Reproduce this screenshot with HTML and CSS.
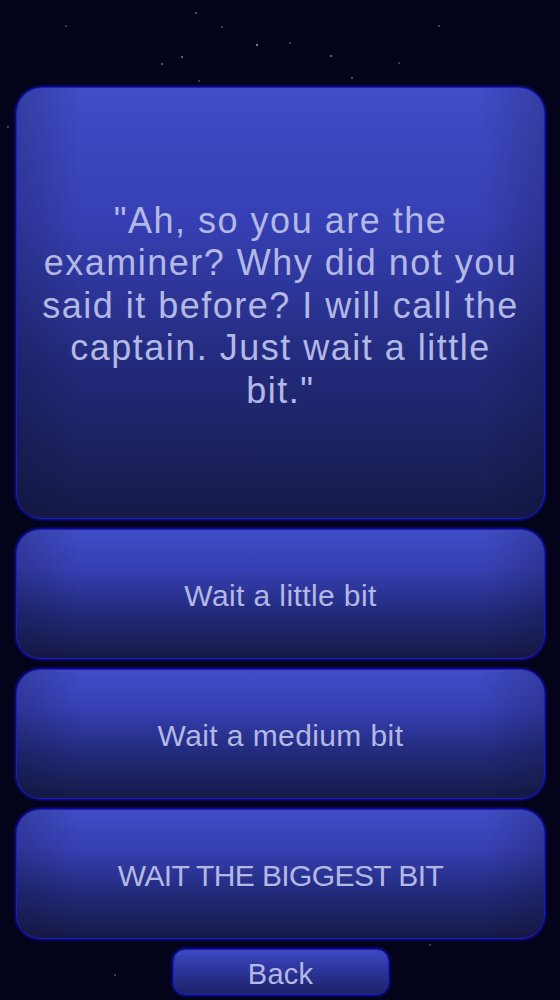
FILE: index.html
```html
<!DOCTYPE html>
<html lang="en">
<head>
<meta charset="utf-8">
<title>Dialogue</title>
<link rel="stylesheet" href="styles.css">
</head>
<body>
<main class="screen">
  <section class="panel speech">
    <p class="speech-text">"Ah, so you are the<br>examiner? Why did not you<br>said it before? I will call the<br>captain. Just wait a little<br>bit."</p>
  </section>
  <button class="panel choice">Wait a little bit</button>
  <button class="panel choice">Wait a medium bit</button>
  <button class="panel choice choice-caps">WAIT THE BIGGEST BIT</button>
  <button class="panel back">Back</button>
</main>
</body>
</html>
```
FILE: styles.css
```css
html, body {
  margin: 0;
  padding: 0;
}

body {
  width: 560px;
  height: 1000px;
  overflow: hidden;
  font-family: "Liberation Sans", Arial, sans-serif;
  background-color: #03031a;
  background-image:
    radial-gradient(circle at 257px 45px, rgba(170,170,220,0.7) 0 1px, transparent 1.6px),
    radial-gradient(circle at 182px 57px, rgba(150,150,210,0.6) 0 1px, transparent 1.6px),
    radial-gradient(circle at 331px 56px, rgba(150,150,210,0.6) 0 1px, transparent 1.6px),
    radial-gradient(circle at 162px 64px, rgba(140,140,200,0.5) 0 1px, transparent 1.5px),
    radial-gradient(circle at 196px 13px, rgba(140,140,200,0.5) 0 1px, transparent 1.5px),
    radial-gradient(circle at 352px 78px, rgba(140,140,200,0.5) 0 1px, transparent 1.5px),
    radial-gradient(circle at 399px 63px, rgba(140,140,200,0.4) 0 1px, transparent 1.5px),
    radial-gradient(circle at 439px 26px, rgba(140,140,200,0.4) 0 1px, transparent 1.5px),
    radial-gradient(circle at 66px 26px, rgba(140,140,200,0.4) 0 1px, transparent 1.5px),
    radial-gradient(circle at 222px 27px, rgba(140,140,200,0.4) 0 1px, transparent 1.5px),
    radial-gradient(circle at 290px 43px, rgba(140,140,200,0.4) 0 1px, transparent 1.5px),
    radial-gradient(circle at 199px 81px, rgba(140,140,200,0.4) 0 1px, transparent 1.5px),
    radial-gradient(circle at 8px 127px, rgba(140,140,200,0.4) 0 1px, transparent 1.5px),
    radial-gradient(circle at 226px 913px, rgba(140,140,200,0.4) 0 1px, transparent 1.5px),
    radial-gradient(circle at 430px 945px, rgba(140,140,200,0.4) 0 1px, transparent 1.5px),
    radial-gradient(circle at 115px 975px, rgba(140,140,200,0.4) 0 1px, transparent 1.5px);
  background-repeat: no-repeat;
}

.screen {
  display: flex;
  flex-direction: column;
  align-items: center;
  gap: 10px;
  padding: 87px 15px 0 16px;
}

.panel {
  box-sizing: border-box;
  width: 529px;
  border: 1px solid #1c1cc8;
  border-radius: 26px;
  box-shadow: 0 0 3px 1px rgba(20, 20, 190, 0.8);
  background:
    linear-gradient(90deg, rgba(10,10,40,0.22) 0%, rgba(10,10,40,0) 12%, rgba(10,10,40,0) 88%, rgba(10,10,40,0.22) 100%),
    linear-gradient(180deg, #404dc6 0%, #3640b4 30%, #222a7a 65%, #161a48 100%);
  color: #b4b8e4;
  display: flex;
  align-items: center;
  justify-content: center;
  text-align: center;
  margin: 0;
  padding: 0;
  font-family: inherit;
}

.speech {
  height: 432px;
  padding: 6px 12px 0;
}

.speech-text {
  margin: 0;
  font-size: 36px;
  line-height: 42.5px;
  letter-spacing: 1.5px;
  font-weight: normal;
  white-space: nowrap;
}

.choice {
  height: 130px;
  font-size: 30px;
  letter-spacing: 0.4px;
  border-radius: 24px;
  padding-top: 3px;
}

.choice-caps {
  letter-spacing: -0.6px;
}

.back {
  width: 216px;
  height: 46px;
  border-radius: 12px;
  font-size: 29px;
  letter-spacing: 0.2px;
  padding-top: 4px;
  background: linear-gradient(180deg, #3c48c0 0%, #2c359c 45%, #1c2266 100%);
}
```
